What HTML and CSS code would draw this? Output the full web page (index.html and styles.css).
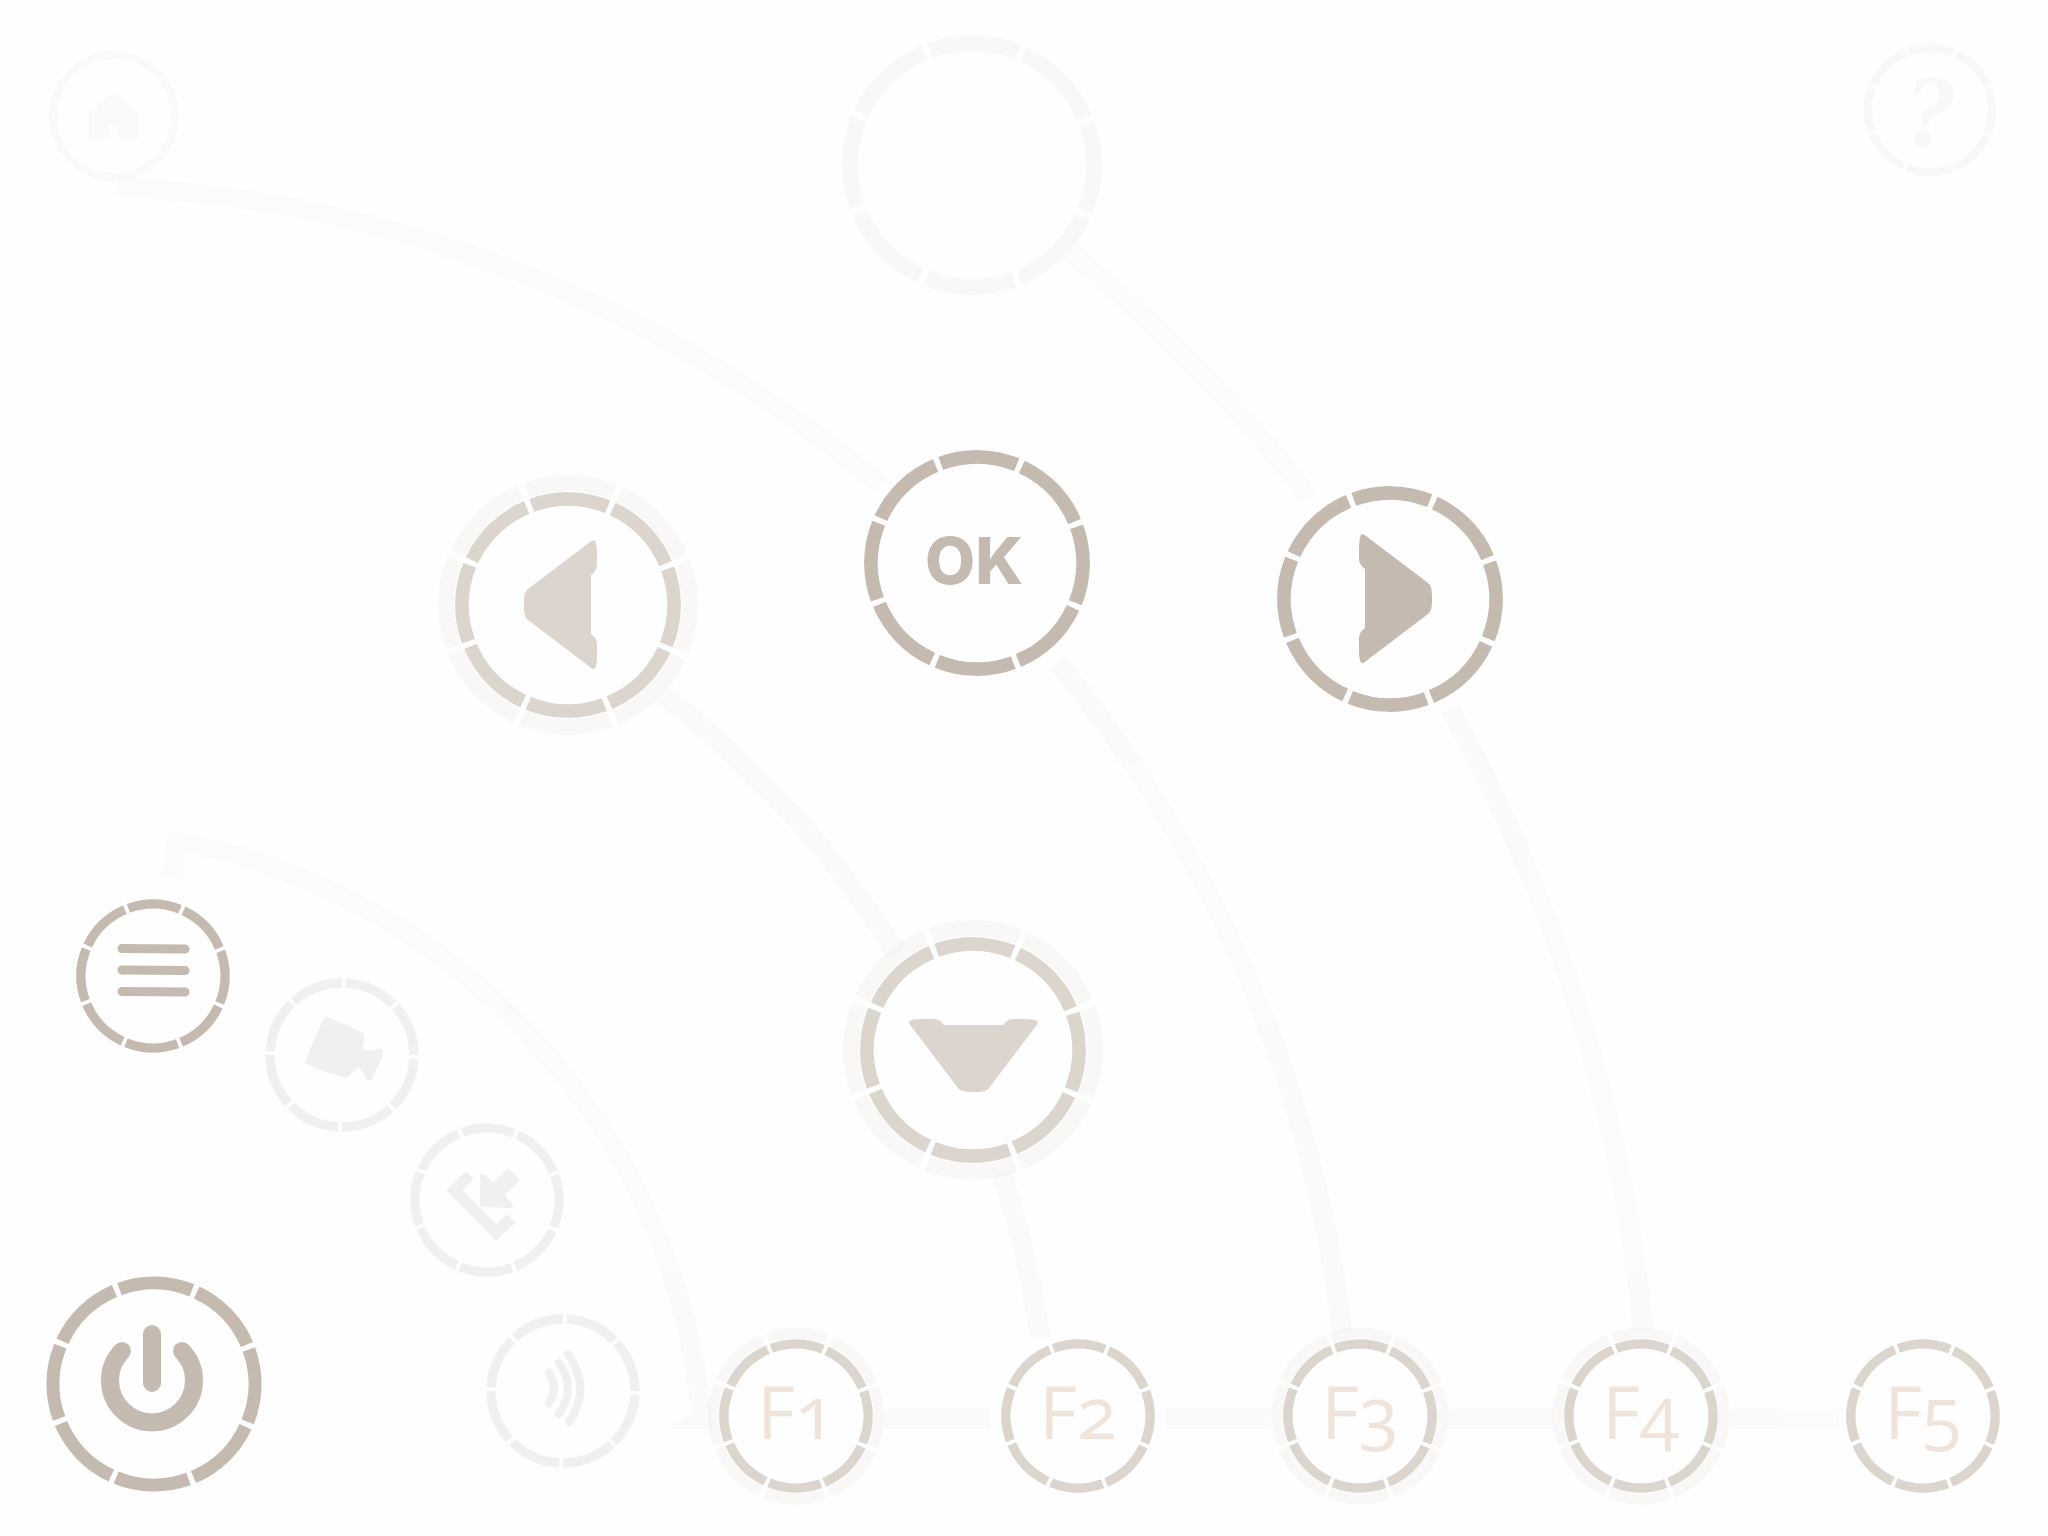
FILE: index.html
```html
<!DOCTYPE html>
<html lang="en">
<head>
<meta charset="utf-8">
<meta name="viewport" content="width=device-width, initial-scale=1">
<title>Remote control</title>
<link rel="stylesheet" href="styles.css">
</head>
<body>
<main class="stage">
  <svg class="links" viewBox="0 0 2048 1536" aria-hidden="true">
    <defs>
      <!-- Eight-part ring with a radius of 100 units -->
      <path id="segments" d="M90.630 42.260A100 100 0 0 1 39.070 92.050M34.200 93.970A100 100 0 0 1-37.460 92.720M-42.260 90.630A100 100 0 0 1-92.050 39.070M-93.970 34.200A100 100 0 0 1-92.720-37.460M-90.630-42.260A100 100 0 0 1-39.070-92.050M-34.200-93.970A100 100 0 0 1 37.460-92.720M42.260-90.630A100 100 0 0 1 92.050-39.070M93.970-34.200A100 100 0 0 1 92.720 37.460"/>
    </defs>
    <g class="link-group">
      <path d="M117 187A1297 1297 0 0 1 881 485"/>
      <path d="M1057 662A1297 1297 0 0 1 1342 1332"/>
      <path d="M1069 251A1596 1596 0 0 1 1310 498"/>
      <path d="M1450 709A1596 1596 0 0 1 1643 1330"/>
      <path d="M662 694A996 996 0 0 1 896 952"/>
      <path d="M1002 1173A996 996 0 0 1 1040 1337"/>
      <path d="M172 879L177 841A649 649 0 0 1 702 1419L712 1419"/>
      <path class="spike" d="M692 1413L664 1429H712V1413Z"/>
      <path d="M885 1419H990M1167 1419H1271M1448 1419H1554M1730 1419H1839"/>
    </g>
  </svg>

  <button class="node small home" type="button" aria-label="Home">
    <svg viewBox="-66 -66 132 132"><circle class="circle" r="61"/><path class="icon" d="M0-24L25-3V24H5V10H-5V24H-25V-3Z"/></svg>
  </button>
  <button class="node large up" type="button" aria-label="Up">
    <svg viewBox="-130 -130 260 260"><use class="ring halo" href="#segments"/></svg>
  </button>
  <button class="node small help" type="button" aria-label="Help">
    <svg viewBox="-66 -66 132 132"><use class="ring" href="#segments"/><text class="question" x="1" y="37">?</text></svg>
  </button>

  <button class="node large left soft" type="button" aria-label="Left">
    <svg viewBox="-130 -130 260 260"><use class="ring halo" href="#segments"/><use class="ring" href="#segments"/><path class="icon" d="M23-30C27-33 29-36 29-41V-50C29-56 28-60 28-62C27-66 25-65 22-63L-40-16C-44-13-44-8-44 0C-44 7-44 11-40 15L22 62C25 65 27 65 28 61C29 57 29 54 29 49V40C29 35 27 32 23 29Z"/></svg>
  </button>
  <button class="node large ok" type="button">
    <svg viewBox="-130 -130 260 260"><use class="ring" href="#segments"/><text class="ok-label" x="-3" y="21">OK</text></svg>
  </button>
  <button class="node large right" type="button" aria-label="Right">
    <svg viewBox="-130 -130 260 260"><use class="ring" href="#segments"/><path class="icon" d="M-25-30C-29-33-31-36-31-41V-50C-31-56-30-60-30-62C-29-66-27-65-24-63L38-16C42-13 42-8 42 0C42 7 42 11 38 15L-24 62C-27 65-29 65-30 61C-31 57-31 54-31 49V40C-31 35-29 32-25 29Z"/></svg>
  </button>
  <button class="node large down soft" type="button" aria-label="Down">
    <svg viewBox="-130 -130 260 260"><use class="ring halo" href="#segments"/><use class="ring" href="#segments"/><path class="icon" transform="rotate(90)" d="M-25-30C-29-33-31-36-31-41V-50C-31-56-30-60-30-62C-29-66-27-65-24-63L38-16C42-13 42-8 42 0C42 7 42 11 38 15L-24 62C-27 65-29 65-30 61C-31 57-31 54-31 49V40C-31 35-29 32-25 29Z"/></svg>
  </button>

  <button class="node medium menu" type="button" aria-label="Menu">
    <svg viewBox="-88 -88 176 176"><use class="ring" href="#segments"/><path class="line" stroke-width="9" d="M-31-27.500L32-27M-31-6L32-5.500M-31 15.500L32 16"/></svg>
  </button>
  <button class="node medium camera pale turned" type="button" aria-label="Camera">
    <svg viewBox="-88 -88 176 176"><use class="ring" href="#segments"/><path class="icon" d="M-18-37Q-17-38-15-38Q4-31 21-22Q23-21 22-18L21-8Q21-6 25-4L37-6Q42-6 41-1L30 24Q28 27 25 24L19 14Q17 12 15 13L6 22Q4 24 0 22Q-18 17-35 9Q-37 8-37 6Z"/></svg>
  </button>
  <button class="node medium call pale" type="button" aria-label="Incoming call">
    <svg viewBox="-88 -88 176 176"><use class="ring" href="#segments"/><path class="icon rounded" d="M-38-10L-21-26L-16-21L-27-10L9 27L20 17L26 22L9 38ZM-5-24L-4-24L6-15L21-29L30-20L15-5L24 5L23 6L-5 5Z"/></svg>
  </button>
  <button class="node medium waves pale turned" type="button" aria-label="Sound">
    <svg viewBox="-88 -88 176 176"><use class="ring" href="#segments"/><path class="line" stroke-width="8" d="M-14-18Q-4-3-14 12M-4-28Q14-3-4 23M5-37Q29-3 6 31"/></svg>
  </button>
  <button class="node big power" type="button" aria-label="Power">
    <svg viewBox="-108 -108 216 216"><use class="ring" href="#segments"/><path class="line" stroke-width="18" d="M-2-50V-1M-32-33A42 42 0 1 0 28-33"/></svg>
  </button>

  <button class="node medium f1 soft" type="button">
    <svg viewBox="-88 -88 176 176"><use class="ring halo" href="#segments"/><use class="ring" href="#segments"/><text class="key" x="0" y="23">F1</text></svg>
  </button>
  <button class="node medium f2 soft" type="button">
    <svg viewBox="-88 -88 176 176"><use class="ring" href="#segments"/><text class="key" x="0" y="23">F2</text></svg>
  </button>
  <button class="node medium f3 soft" type="button">
    <svg viewBox="-88 -88 176 176"><use class="ring halo" href="#segments"/><use class="ring" href="#segments"/><text class="key" x="0" y="23">F3</text></svg>
  </button>
  <button class="node medium f4 soft" type="button">
    <svg viewBox="-88 -88 176 176"><use class="ring halo" href="#segments"/><use class="ring" href="#segments"/><text class="key" x="0" y="23">F4</text></svg>
  </button>
  <button class="node medium f5 soft" type="button">
    <svg viewBox="-88 -88 176 176"><use class="ring" href="#segments"/><text class="key" x="0" y="23">F5</text></svg>
  </button>
</main>
</body>
</html>
```

FILE: styles.css
```css
* { box-sizing: border-box; }

body {
  margin: 0;
  background: #fefefe;
}

/* The canvas is 2048 x 1536 units and scales with the window. */
.stage {
  position: relative;
  width: 100%;
  aspect-ratio: 4 / 3;
  overflow: hidden;
}

.links {
  display: block;
  width: 100%;
}

.link-group {
  fill: none;
  stroke: #000;
  stroke-width: 20;
  opacity: 0.012;
}

.spike {
  fill: #000;
  stroke: none;
}

/* --x and --y are the centre of a node, --size its width, in canvas units. */
.node {
  position: absolute;
  left: calc(var(--x) * 100% / 2048);
  top: calc(var(--y) * 100% / 1536);
  width: calc(var(--size) * 100% / 2048);
  aspect-ratio: 1;
  transform: translate(-50%, -50%);
  padding: 0;
  border: 0;
  border-radius: 50%;
  background: none;
  color: #c5bab0;
  cursor: pointer;
}

.node svg {
  display: block;
  width: 100%;
  overflow: visible;
}

/* --ring and --halo are radii as a share of the 100-unit ring. */
.small { --size: 132; --ring: 0.62; }
.medium { --size: 176; --ring: 0.72; --halo: 0.83; }
.big { --size: 216; --ring: 1.01; }
.large { --size: 260; --ring: 1.06; --halo: 1.22; }

.soft { color: #dcd5cd; }
.pale { color: #f2f0ee; }

.home { --x: 114; --y: 116; color: rgb(197 186 176 / 0.06); }
.up { --x: 972; --y: 165; }
.help { --x: 1930; --y: 110; color: #f9f8f6; }
.left { --x: 568; --y: 605; }
.ok { --x: 977; --y: 563; }
.right { --x: 1390; --y: 599; }
.down { --x: 973; --y: 1050; }
.menu { --x: 153; --y: 976; }
.camera { --x: 342; --y: 1055; }
.call { --x: 487; --y: 1200; }
.waves { --x: 563; --y: 1391; }
.power { --x: 154; --y: 1384; }
.f1 { --x: 796; --y: 1416; }
.f2 { --x: 1078; --y: 1416; }
.f3 { --x: 1360; --y: 1416; }
.f4 { --x: 1641; --y: 1416; }
.f5 { --x: 1923; --y: 1416; }

.ring {
  fill: none;
  stroke: currentColor;
  stroke-width: 13;
  transform: scale(var(--ring));
}

.halo {
  stroke: rgb(197 186 176 / 0.09);
  transform: scale(var(--halo));
}

.turned .ring { transform: rotate(-22deg) scale(var(--ring)); }

.circle {
  fill: none;
  stroke: currentColor;
  stroke-width: 8;
}

.icon { fill: currentColor; }

.rounded {
  stroke: currentColor;
  stroke-width: 4;
  stroke-linejoin: round;
}

.line {
  fill: none;
  stroke: currentColor;
  stroke-linecap: round;
}

text {
  fill: currentColor;
  text-anchor: middle;
}

.ok-label {
  font: 800 65px Inter, sans-serif;
}

.key {
  fill: #f0e3da;
  font: 400 73px "Open Sans", "Noto Sans", sans-serif;
  font-variant-numeric: oldstyle-nums;
}

.question {
  font: italic 700 104px "Liberation Serif", serif;
}
```
